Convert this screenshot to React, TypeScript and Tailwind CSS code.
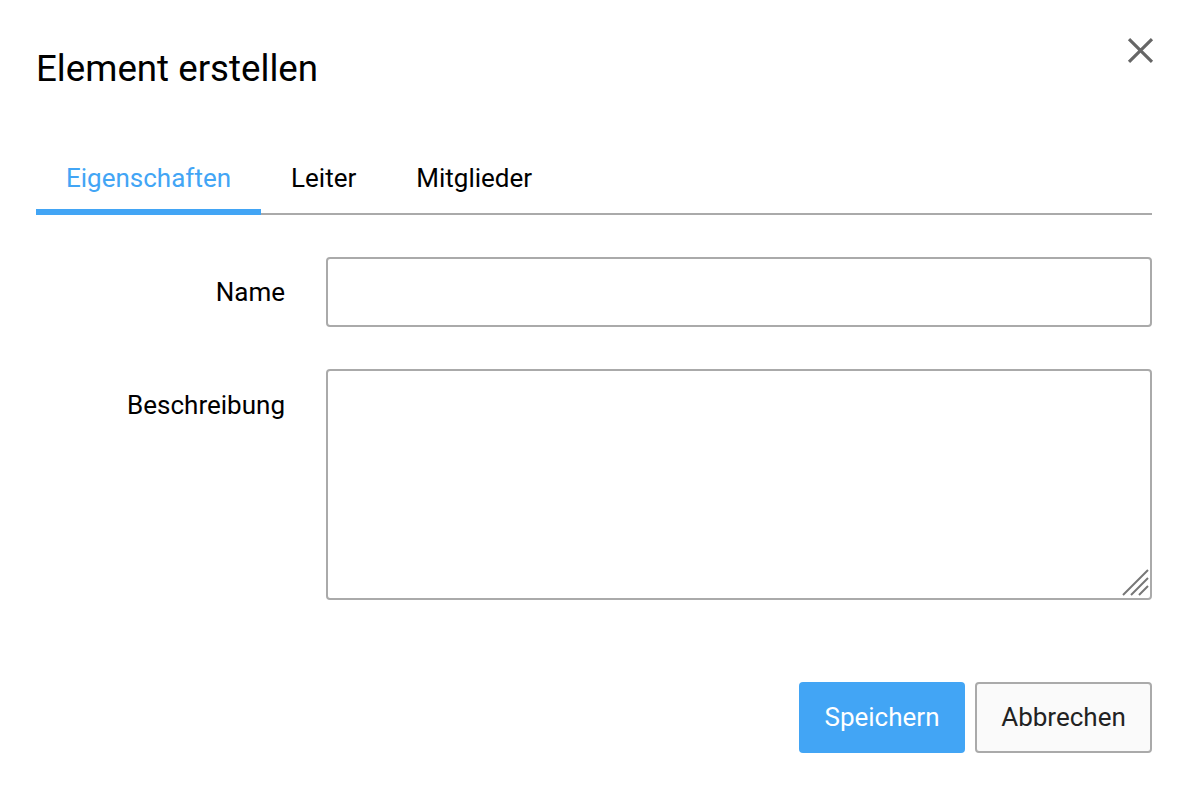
import { useState } from "react";

const tabs = ["Eigenschaften", "Leiter", "Mitglieder"];

const App = () => {
  const [active, setActive] = useState(0);

  return (
    <div className="w-[1184px] h-[790px] bg-white pl-[36px] pr-[32px] font-['Roboto',sans-serif] text-black">
      {/* Header */}
      <div className="flex items-start justify-between pt-[44px]">
        <h1 className="text-[36.7px] leading-[50px] font-normal">Element erstellen</h1>
        <button className="mt-[-8.5px] mr-[-2.5px] text-[#666]">
          <svg width="29" height="29" viewBox="0 0 24 24" fill="none" stroke="currentColor" strokeWidth="2.6">
            <path d="M2.5 2.5L21.5 21.5M21.5 2.5L2.5 21.5" />
          </svg>
        </button>
      </div>

      {/* Tabs */}
      <div className="mt-[68px] flex border-b-2 border-[#aaa]">
        {tabs.map((t, i) => (
          <button
            key={t}
            onClick={() => setActive(i)}
            className={
              i === active
                ? "px-[30px] pb-[15px] text-[26px] leading-[32px] text-[#42a5f5] border-b-[6px] border-[#42a5f5] -mb-[2px]"
                : "px-[30px] pb-[19px] text-[26px] leading-[32px] text-black"
            }
          >
            {t}
          </button>
        ))}
      </div>

      {/* Form */}
      <div className="mt-[42px] grid grid-cols-[249px_1fr] gap-x-[41px] gap-y-[42px]">
        <label className="text-right text-[26px] leading-[70px]">Name</label>
        <input className="h-[70px] w-full rounded-[4px] border-2 border-[#aaa] px-3 text-[26px] outline-none" />

        <label className="text-right text-[26px] leading-[30px] pt-[21px]">Beschreibung</label>
        <div className="relative h-[231px]">
          <textarea className="h-full w-full resize-none rounded-[4px] border-2 border-[#aaa] px-3 py-2 text-[26px] outline-none" />
          <svg
            className="pointer-events-none absolute right-[3px] bottom-[4px]"
            width="28"
            height="28"
            viewBox="0 0 28 28"
            fill="none"
            stroke="#777"
            strokeWidth="2"
          >
            <path d="M2 27L27 2M10 27L27 10M18 27L27 18" />
          </svg>
        </div>
      </div>

      {/* Buttons */}
      <div className="mt-[82px] flex justify-end gap-[10px]">
        <button className="h-[71px] w-[166px] rounded-[4px] bg-[#42a5f5] text-[26px] text-white">Speichern</button>
        <button className="h-[71px] w-[177px] rounded-[4px] border-2 border-[#aaa] bg-[#fafafa] text-[26px] text-[#222]">Abbrechen</button>
      </div>
    </div>
  );
};

export default App;
